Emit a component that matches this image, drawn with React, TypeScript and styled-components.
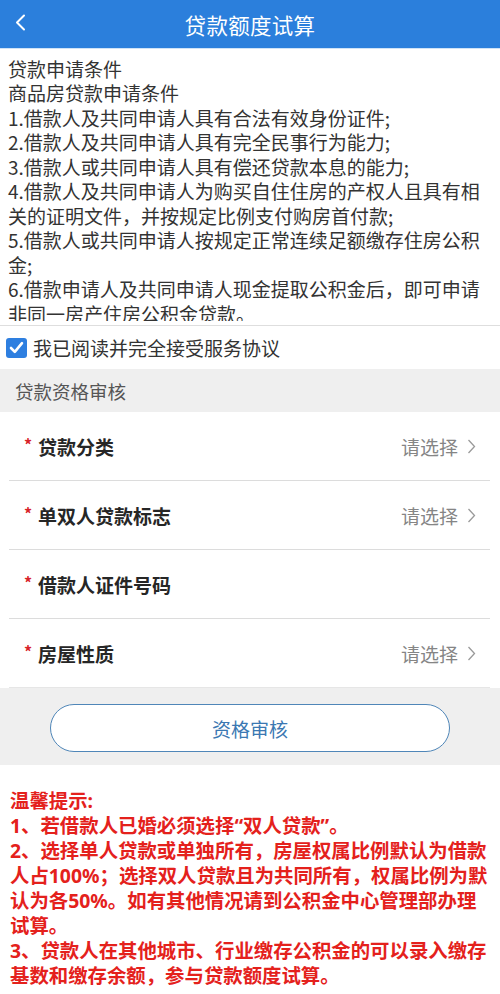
import React from "react";
import styled, { createGlobalStyle } from "styled-components";

const GlobalStyle = createGlobalStyle`
  html, body { margin: 0; padding: 0; background: #ffffff; }
  body { font-family: "Noto Sans CJK SC", "Noto Sans", sans-serif; }
  * { box-sizing: border-box; }
`;

const Page = styled.div`
  width: 500px;
  min-height: 994px;
  display: flex;
  flex-direction: column;
  background: #ffffff;
`;

const Header = styled.header`
  height: 49px;
  background: #2b7fdc;
  display: flex;
  align-items: center;
  justify-content: center;
  position: relative;
  border-bottom: 1px solid #cfe3f7;
`;

const BackButton = styled.div`
  position: absolute;
  left: 13px;
  top: 12px;
  width: 14px;
  height: 20px;
  display: flex;
  align-items: center;
  justify-content: center;
`;

const Title = styled.h1`
  margin: 0;
  font-size: 21.5px;
  font-weight: 400;
  color: #ffffff;
  letter-spacing: 0.3px;
`;

const TermsPanel = styled.div`
  padding-bottom: 4px;
`;

const TermsScroll = styled.div`
  height: 272px;
  overflow: hidden;
  padding: 8px 8px 0 8px;
  font-size: 19px;
  line-height: 24.45px;
  color: #333333;
`;

const TermLine = styled.div``;

const AgreeRow = styled.label`
  height: 44px;
  border-top: 1px solid #dedede;
  display: flex;
  align-items: center;
  gap: 6px;
  padding-left: 6px;
  font-size: 19px;
  color: #333333;
`;

const CheckBox = styled.span`
  width: 21px;
  height: 20px;
  border-radius: 3px;
  background: #2e7fe0;
  display: flex;
  align-items: center;
  justify-content: center;
`;

const Section = styled.section`
  background: #efefef;
  display: flex;
  flex-direction: column;
`;

const SectionTitle = styled.div`
  height: 43px;
  display: flex;
  align-items: center;
  padding-left: 15px;
  font-size: 18.5px;
  color: #555555;
`;

const FormList = styled.div`
  background: #ffffff;
  padding: 0 10px 0 9px;
`;

const FormRow = styled.div<{ $last?: boolean }>`
  height: 69px;
  display: flex;
  align-items: center;
  padding: 0 14px 0 15px;
  border-bottom: 1px solid ${(p) => (p.$last ? "#e6e6e6" : "#dcdcdc")};
`;

const Star = styled.span`
  color: #d8232a;
  font-size: 16px;
  font-weight: 700;
  width: 14px;
  margin-top: -4px;
`;

const Label = styled.span`
  font-size: 19px;
  font-weight: 700;
  color: #262626;
  flex: 1;
`;

const Picker = styled.span`
  display: flex;
  align-items: center;
  gap: 9px;
  font-size: 19px;
  color: #858585;
`;

const ButtonArea = styled.div`
  padding: 16px 50px 13px 50px;
`;

const CheckButton = styled.button`
  width: 100%;
  height: 48px;
  border-radius: 24px;
  border: 1.5px solid #4f86b8;
  background: #ffffff;
  font-family: inherit;
  font-size: 19px;
  color: #3b78b2;
  display: flex;
  align-items: center;
  justify-content: center;
`;

const Notice = styled.div`
  padding: 23px 9px 0 10px;
  font-family: "Noto Sans", "Noto Sans CJK SC", sans-serif;
  font-size: 19.4px;
  line-height: 25px;
  font-weight: 700;
  color: #e4211c;
`;

const NoticeLine = styled.div``;

const Chevron = () => (
  <svg width="9" height="15" viewBox="0 0 9 15">
    <polyline points="1.5,1 7.5,7.5 1.5,14" fill="none" stroke="#9a9a9a" strokeWidth="1.3" />
  </svg>
);

const terms = [
  "贷款申请条件",
  "商品房贷款申请条件",
  "1.借款人及共同申请人具有合法有效身份证件;",
  "2.借款人及共同申请人具有完全民事行为能力;",
  "3.借款人或共同申请人具有偿还贷款本息的能力;",
  "4.借款人及共同申请人为购买自住住房的产权人且具有相关的证明文件，并按规定比例支付购房首付款;",
  "5.借款人或共同申请人按规定正常连续足额缴存住房公积金;",
  "6.借款申请人及共同申请人现金提取公积金后，即可申请非同一房产住房公积金贷款。",
];

const rows = [
  { label: "贷款分类", pick: true },
  { label: "单双人贷款标志", pick: true },
  { label: "借款人证件号码", pick: false },
  { label: "房屋性质", pick: true },
];

const notices = [
  "温馨提示:",
  "1、若借款人已婚必须选择“双人贷款”。",
  "2、选择单人贷款或单独所有，房屋权属比例默认为借款人占100%；选择双人贷款且为共同所有，权属比例为默认为各50%。如有其他情况请到公积金中心管理部办理试算。",
  "3、贷款人在其他城市、行业缴存公积金的可以录入缴存基数和缴存余额，参与贷款额度试算。",
];

export default function App() {
  return (
    <Page>
      <GlobalStyle />
      <Header>
        <BackButton>
          <svg width="11" height="17" viewBox="0 0 11 17">
            <polyline points="9,1.5 2,8.5 9,15.5" fill="none" stroke="#ffffff" strokeWidth="2" strokeLinecap="round" strokeLinejoin="round" />
          </svg>
        </BackButton>
        <Title>贷款额度试算</Title>
      </Header>
      <TermsPanel>
        <TermsScroll>
          {terms.map((t) => (
            <TermLine key={t}>{t}</TermLine>
          ))}
        </TermsScroll>
      </TermsPanel>
      <AgreeRow>
        <CheckBox>
          <svg width="15" height="13" viewBox="0 0 15 13">
            <polyline points="2,7 5.8,10.8 13,2.2" fill="none" stroke="#ffffff" strokeWidth="2.6" strokeLinecap="round" strokeLinejoin="round" />
          </svg>
        </CheckBox>
        我已阅读并完全接受服务协议
      </AgreeRow>
      <Section>
        <SectionTitle>贷款资格审核</SectionTitle>
        <FormList>
          {rows.map((r, i) => (
            <FormRow key={r.label} $last={i === rows.length - 1}>
              <Star>*</Star>
              <Label>{r.label}</Label>
              {r.pick && (
                <Picker>
                  请选择
                  <Chevron />
                </Picker>
              )}
            </FormRow>
          ))}
        </FormList>
        <ButtonArea>
          <CheckButton>资格审核</CheckButton>
        </ButtonArea>
      </Section>
      <Notice>
        {notices.map((n) => (
          <NoticeLine key={n}>{n}</NoticeLine>
        ))}
      </Notice>
    </Page>
  );
}
